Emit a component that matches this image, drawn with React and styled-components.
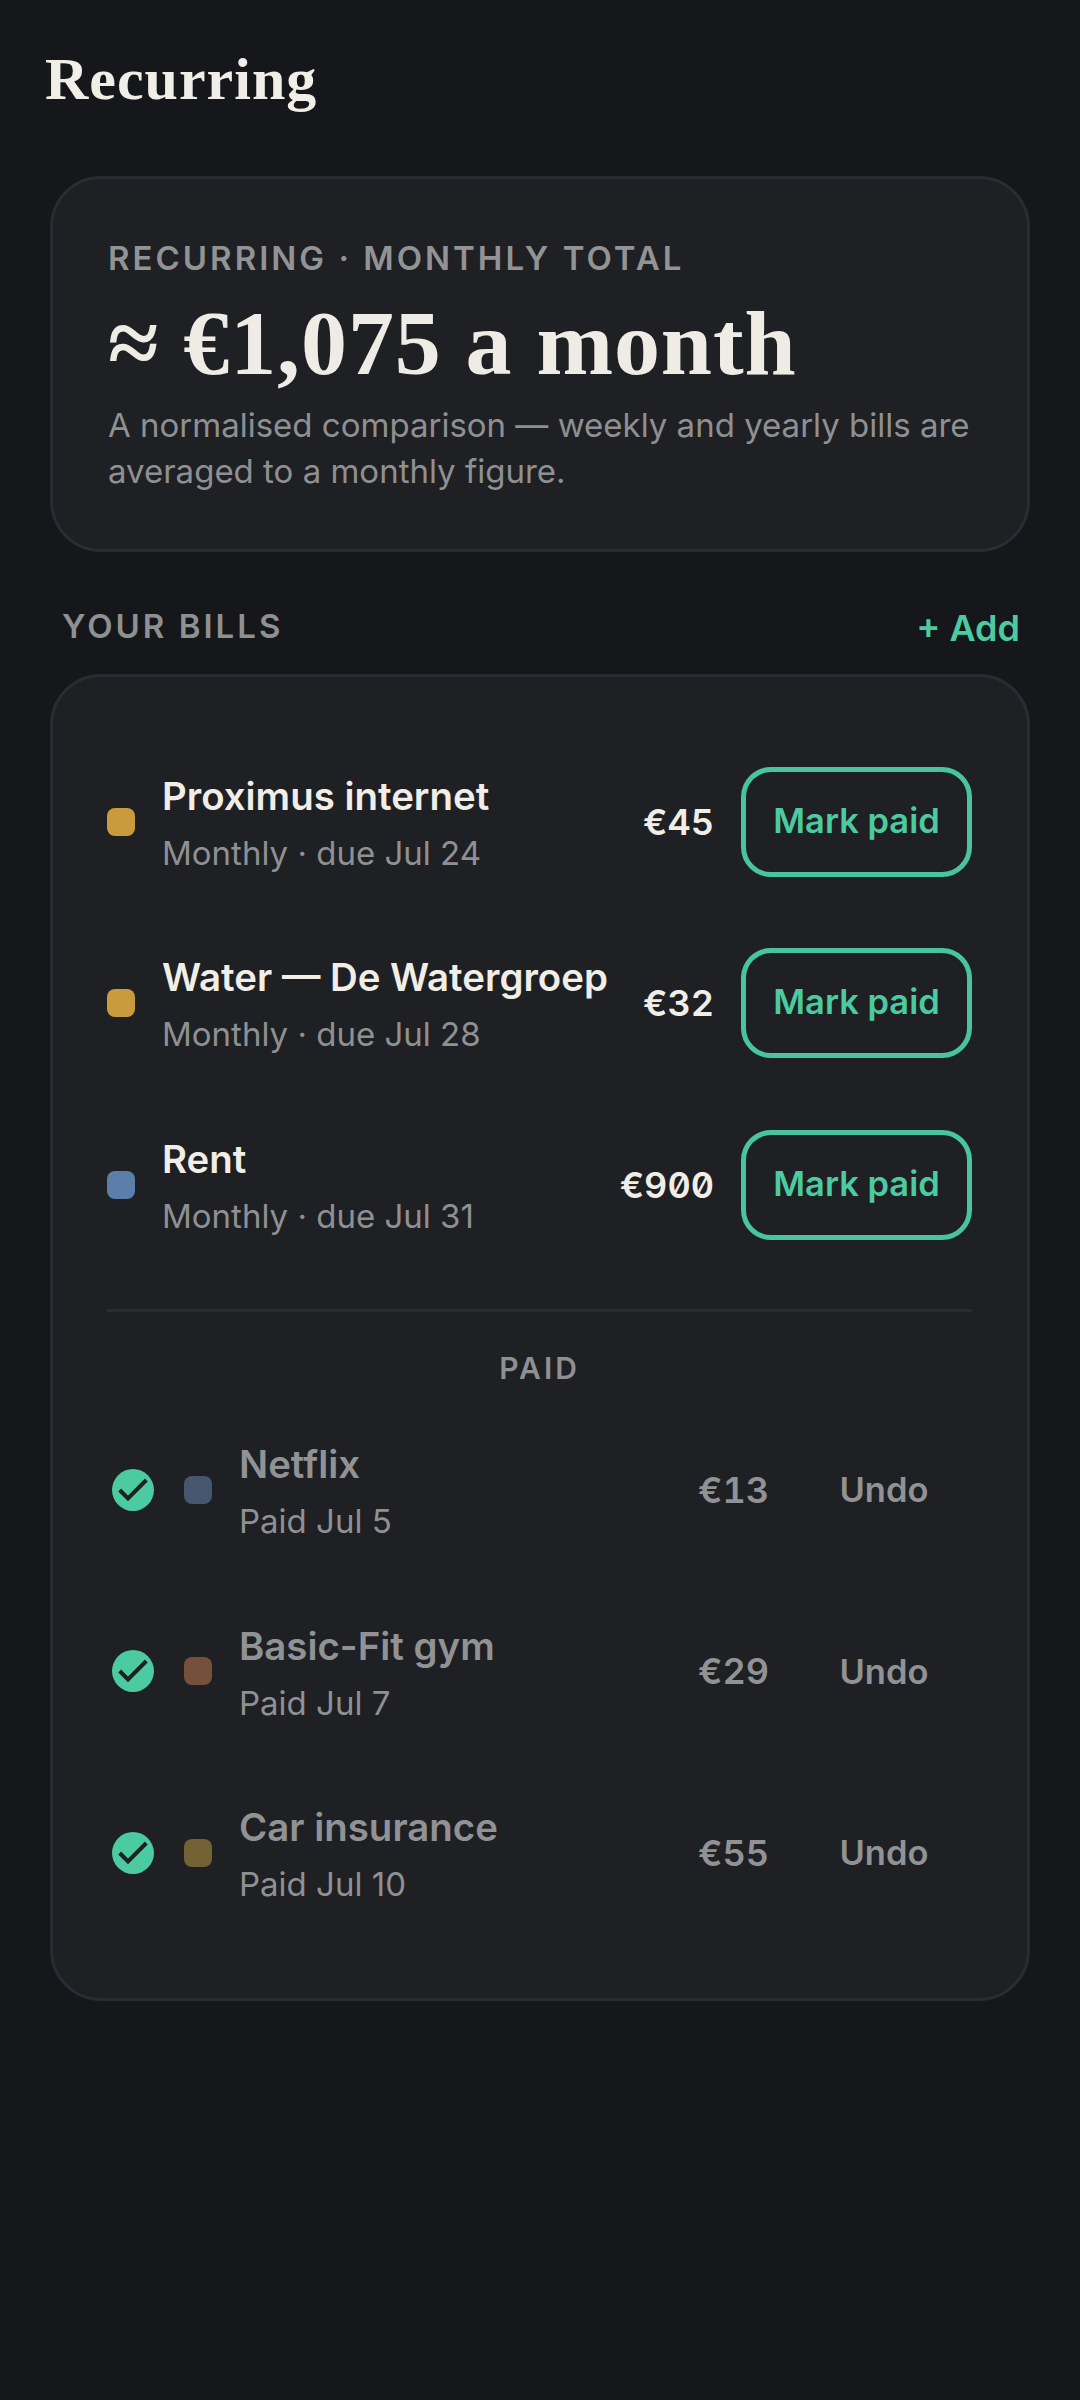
import React from 'react'
import styled, { createGlobalStyle } from 'styled-components'

const GlobalStyle = createGlobalStyle`
  html, body {
    margin: 0;
    background: #15171b;
  }
  body {
    font-family: Inter, "Liberation Sans", sans-serif;
    color: #efece5;
  }
`

const Page = styled.div`
  width: 1080px;
  height: 2400px;
  box-sizing: border-box;
  padding: 44px 50px 0;
  background: #15171b;
`

const Title = styled.h1`
  margin: 0 0 0 -5px;
  font-family: "Liberation Serif", serif;
  font-size: 60px;
  line-height: 70px;
  font-weight: 700;
  letter-spacing: 1px;
  color: #f1eee7;
`

const Card = styled.section`
  box-sizing: border-box;
  border: 3px solid #2a2c31;
  border-radius: 51px;
  background: #1e2024;
`

const Hero = styled(Card)`
  height: 376px;
  margin-top: 62px;
  padding: 56px 55px 0;
`

const Eyebrow = styled.div`
  font-size: 33px;
  line-height: 46px;
  font-weight: 600;
  letter-spacing: 3px;
  color: #929395;
`

const Total = styled.div`
  margin-top: 15px;
  font-family: "Liberation Serif", serif;
  font-size: 92px;
  line-height: 94px;
  font-weight: 700;
  letter-spacing: 0.9px;
  color: #efece5;
`

const HeroNote = styled.p`
  margin: 12px 0 0;
  font-size: 33px;
  line-height: 46px;
  color: #8f9092;
`

const SectionHead = styled.div`
  display: flex;
  align-items: center;
  justify-content: space-between;
  height: 50px;
  margin-top: 49px;
  padding: 0 10px 0 12px;
`

const SectionTitle = styled.div`
  font-size: 33px;
  font-weight: 600;
  letter-spacing: 3px;
  color: #8f9092;
`

const AddLink = styled.button`
  margin-top: 4px;
  padding: 0;
  border: 0;
  background: none;
  font-family: inherit;
  font-size: 36px;
  font-weight: 600;
  color: #4ccaa0;
`

const Bills = styled(Card)`
  height: 1327px;
  margin-top: 23px;
  padding: 54px 55px 0 54px;
`

const Row = styled.div`
  display: flex;
  align-items: center;
  height: 181.5px;
  gap: 27px;
`

const Swatch = styled.span`
  flex: none;
  width: 28px;
  height: 28px;
  border-radius: 8px;
  background: ${p => p.$color};
`

const Info = styled.div`
  flex: 1;
  min-width: 0;
  padding-top: ${p => (p.$paid ? '4px' : '3px')};
`

const Name = styled.div`
  font-size: 38.4px;
  line-height: 50px;
  font-weight: 600;
  white-space: nowrap;
  color: ${p => (p.$paid ? '#919294' : '#f1eee7')};
`

const Meta = styled.div`
  margin-top: 9px;
  font-size: 33px;
  line-height: 46px;
  color: #8f9092;
`

const Amount = styled.div`
  flex: none;
  margin-left: 1px;
  font-size: 36px;
  font-weight: 600;
  font-variant-numeric: tabular-nums slashed-zero;
  color: ${p => (p.$paid ? '#919294' : '#f1eee7')};
`

const MarkPaid = styled.button`
  flex: none;
  box-sizing: border-box;
  width: 231px;
  height: 110px;
  padding: 0 0 3px;
  border: 5px solid #48c59c;
  border-radius: 30px;
  background: transparent;
  font-family: inherit;
  font-size: 34.5px;
  font-weight: 600;
  color: #4ccaa0;
`

const Undo = styled.button`
  flex: none;
  width: 176px;
  height: 100px;
  padding: 0;
  border: 0;
  background: none;
  font-family: inherit;
  font-size: 34.5px;
  font-weight: 600;
  color: #919294;
`

const Divider = styled.hr`
  height: 3px;
  margin: 33.5px 0 0;
  border: 0;
  background: #2a2c31;
`

const PaidLabel = styled.div`
  margin: 36px 0 11px;
  font-size: 30px;
  line-height: 40px;
  font-weight: 600;
  letter-spacing: 3px;
  text-align: center;
  color: #8f9092;
`

const CheckBadge = styled.span`
  flex: none;
  display: flex;
  align-items: center;
  justify-content: center;
  width: 42px;
  height: 42px;
  margin-left: 5px;
  margin-right: 3px;
  border-radius: 50%;
  background: #4ccaa0;
`

const CheckMark = () => (
  <svg width="40" height="40" viewBox="0 0 24 24" fill="none" stroke="#1e2024" strokeWidth="2.4">
    <path d="M20 6 9 17l-5-5" />
  </svg>
)

const dueBills = [
  { name: 'Proximus internet', meta: 'Monthly · due Jul 24', amount: '€45', color: '#c99b3d' },
  { name: 'Water — De Watergroep', meta: 'Monthly · due Jul 28', amount: '€32', color: '#c99b3d' },
  { name: 'Rent', meta: 'Monthly · due Jul 31', amount: '€900', color: '#5b7fa8' },
]

const paidBills = [
  { name: 'Netflix', meta: 'Paid Jul 5', amount: '€13', color: '#47566f' },
  { name: 'Basic-Fit gym', meta: 'Paid Jul 7', amount: '€29', color: '#75513c' },
  { name: 'Car insurance', meta: 'Paid Jul 10', amount: '€55', color: '#756234' },
]

function App() {
  return (
    <Page>
      <GlobalStyle />
      <Title>Recurring</Title>
      <Hero>
        <Eyebrow>RECURRING · MONTHLY TOTAL</Eyebrow>
        <Total>≈ €1,075 a month</Total>
        <HeroNote>A normalised comparison — weekly and yearly bills are averaged to a monthly figure.</HeroNote>
      </Hero>
      <SectionHead>
        <SectionTitle>YOUR BILLS</SectionTitle>
        <AddLink>+ Add</AddLink>
      </SectionHead>
      <Bills>
        {dueBills.map(bill => (
          <Row key={bill.name}>
            <Swatch $color={bill.color} />
            <Info>
              <Name>{bill.name}</Name>
              <Meta>{bill.meta}</Meta>
            </Info>
            <Amount>{bill.amount}</Amount>
            <MarkPaid>Mark paid</MarkPaid>
          </Row>
        ))}
        <Divider />
        <PaidLabel>PAID</PaidLabel>
        {paidBills.map(bill => (
          <Row key={bill.name} $paid>
            <CheckBadge>
              <CheckMark />
            </CheckBadge>
            <Swatch $color={bill.color} />
            <Info $paid>
              <Name $paid>{bill.name}</Name>
              <Meta>{bill.meta}</Meta>
            </Info>
            <Amount $paid>{bill.amount}</Amount>
            <Undo>Undo</Undo>
          </Row>
        ))}
      </Bills>
    </Page>
  )
}

export default App
